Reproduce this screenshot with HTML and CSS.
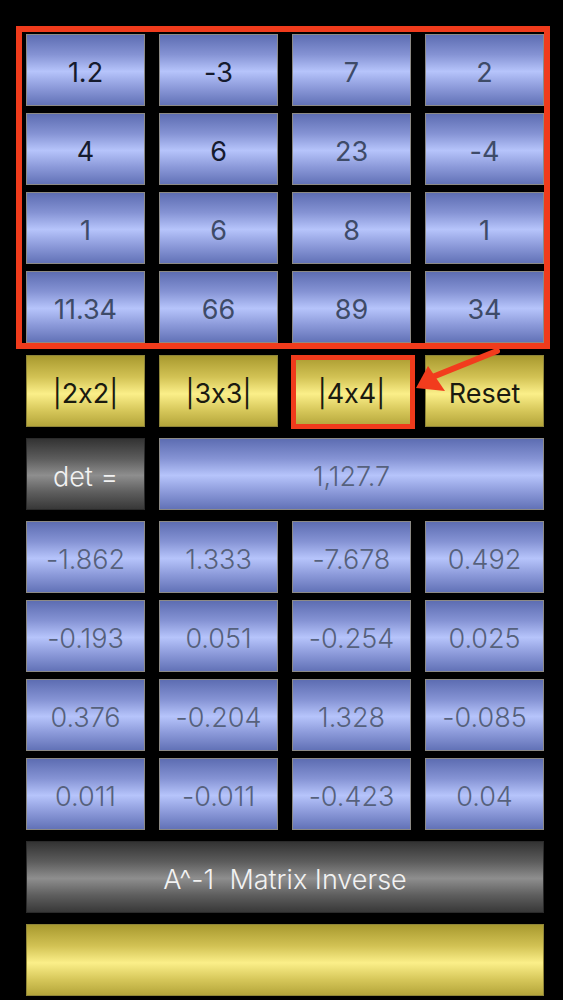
FILE: index.html
```html
<!DOCTYPE html>
<html lang="en">
<head>
    <meta charset="UTF-8">
    <meta name="viewport" content="width=device-width, initial-scale=1.0">
    <title>Matrix Inverse</title>
    <link rel="stylesheet" href="styles.css">
</head>
<body>
    <div class="app">
        <div class="grid matrix">
            <div class="cell edited">1.2</div>
            <div class="cell edited">-3</div>
            <div class="cell">7</div>
            <div class="cell">2</div>
            <div class="cell edited">4</div>
            <div class="cell edited">6</div>
            <div class="cell">23</div>
            <div class="cell">-4</div>
            <div class="cell">1</div>
            <div class="cell">6</div>
            <div class="cell">8</div>
            <div class="cell">1</div>
            <div class="cell">11.34</div>
            <div class="cell">66</div>
            <div class="cell">89</div>
            <div class="cell">34</div>
        </div>

        <div class="grid controls">
            <div class="btn gold">|2x2|</div>
            <div class="btn gold">|3x3|</div>
            <div class="btn gold">|4x4|</div>
            <div class="btn gold">Reset</div>
        </div>

        <div class="det-row">
            <div class="btn dark">det =</div>
            <div class="cell result">1,127.7</div>
        </div>

        <div class="grid inverse">
            <div class="cell result">-1.862</div>
            <div class="cell result">1.333</div>
            <div class="cell result">-7.678</div>
            <div class="cell result">0.492</div>
            <div class="cell result">-0.193</div>
            <div class="cell result">0.051</div>
            <div class="cell result">-0.254</div>
            <div class="cell result">0.025</div>
            <div class="cell result">0.376</div>
            <div class="cell result">-0.204</div>
            <div class="cell result">1.328</div>
            <div class="cell result">-0.085</div>
            <div class="cell result">0.011</div>
            <div class="cell result">-0.011</div>
            <div class="cell result">-0.423</div>
            <div class="cell result">0.04</div>
        </div>

        <div class="btn dark wide">A^-1&nbsp; Matrix Inverse</div>
        <div class="btn gold wide"></div>

        <!-- annotation marks drawn over the screenshot -->
        <div class="mark mark-matrix"></div>
        <div class="mark mark-button"></div>
        <svg class="arrow" width="100" height="60" viewBox="0 0 100 60">
            <line x1="97" y1="17" x2="30" y2="44" stroke="#f23c1d" stroke-width="6" stroke-linecap="round"/>
            <polygon points="16,54 28,32 45,57" fill="#f23c1d"/>
        </svg>
    </div>
</body>
</html>
```

FILE: styles.css
```css
body {
    margin: 0;
    background: #000;
    font-family: 'Inter', 'Roboto', sans-serif;
    font-feature-settings: "calt" 0;
}
.app {
    position: relative;
    width: 518px;
    padding: 34px 19px 0 26px;
}
.grid {
    display: grid;
    grid-template-columns: repeat(4, 1fr);
    grid-auto-rows: 72px;
    column-gap: 14px;
    row-gap: 7px;
}
.cell, .btn {
    display: flex;
    align-items: center;
    justify-content: center;
    box-sizing: border-box;
    padding-top: 4px;
    font-size: 27px;
}
.cell {
    border: 1px solid #8c8a86;
    background: linear-gradient(to bottom, #5d6db2 0%, #8593d4 28%, #b6c4fb 52%, #8b99d9 76%, #6272b7 100%);
    color: #3e4b68;
}
.cell.edited {
    color: #151b2e;
}
.cell.result {
    color: #56617c;
    font-weight: 300;
}
.btn {
    height: 72px;
}
.gold {
    border: 1px solid #8f8538;
    background: linear-gradient(to bottom, #a99a2f 0%, #d2c254 30%, #fbef89 54%, #d6c75a 78%, #b4a53a 100%);
    color: #1a1a10;
}
.dark {
    border: 1px solid #2a2a2a;
    background: linear-gradient(to bottom, #333 0%, #5c5c5c 28%, #8e8e8e 52%, #5e5e5e 76%, #383838 100%);
    color: #f2f2f2;
    font-weight: 300;
}
.matrix {
    margin-bottom: 12px;
}
.controls {
    margin-bottom: 11px;
}
.det-row {
    display: grid;
    grid-template-columns: 119px 1fr;
    column-gap: 14px;
    height: 72px;
    margin-bottom: 11px;
}
.wide {
    margin-top: 11px;
}
.mark {
    position: absolute;
    box-sizing: border-box;
    border: 6px solid #f03b1c;
}
.mark-matrix {
    left: 16px;
    top: 26px;
    width: 534px;
    height: 323px;
}
.mark-button {
    left: 291px;
    top: 355px;
    width: 124px;
    height: 74px;
    border-width: 5px;
}
.arrow {
    position: absolute;
    left: 400px;
    top: 334px;
}
```
